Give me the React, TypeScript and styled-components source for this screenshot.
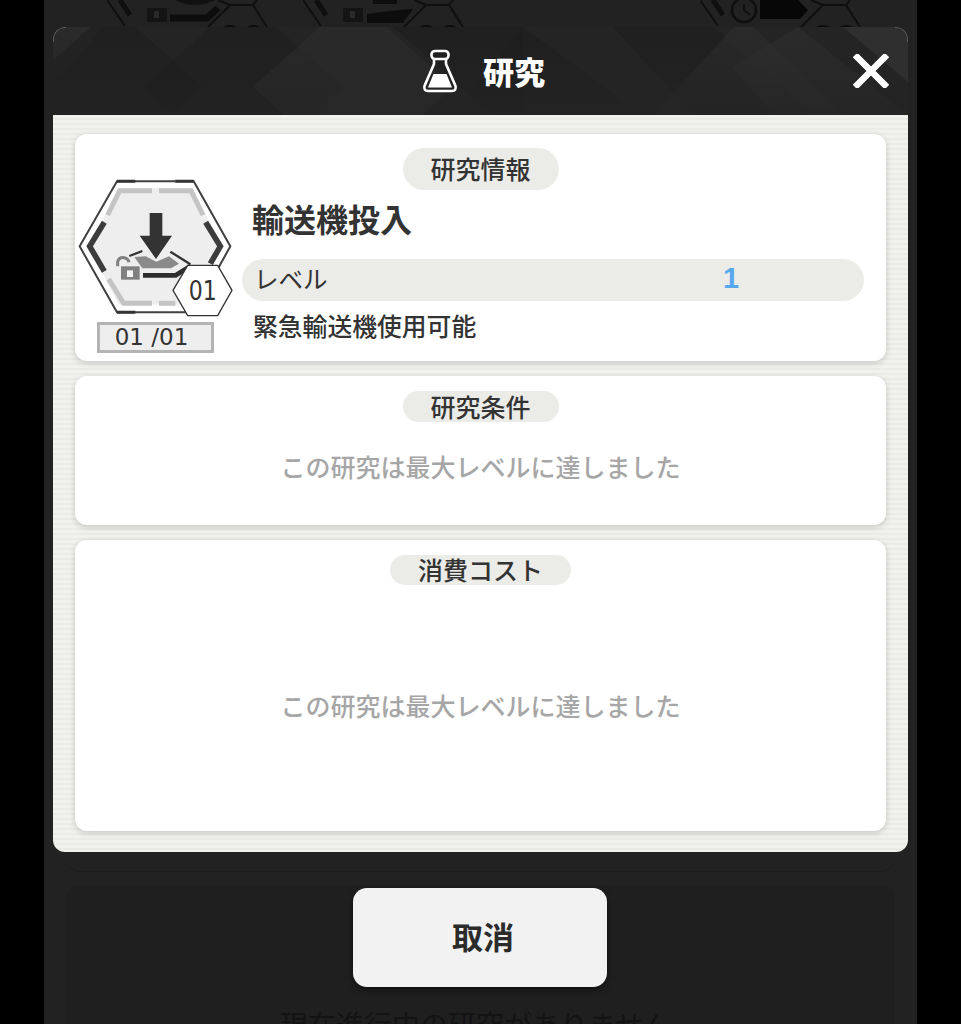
import * as React from 'react';
import styled, { createGlobalStyle } from 'styled-components';

const GlobalStyle = createGlobalStyle`
  html, body {
    margin: 0;
    padding: 0;
    height: 1024px;
    overflow: hidden;
    background: #000;
    font-family: "Noto Sans CJK JP", "Noto Sans", sans-serif;
  }
`;

const BackHex = ({ kind }: { kind: 'lock' | 'lock2' | 'clock' }) => (
  <svg width="161" height="27" viewBox="0 0 161 27">
    <g fill="none" stroke="#0f0f0f" strokeWidth="2">
      <path d="M0 0 L18 26" />
      <path d="M13 0 L23 15" strokeWidth="5" />
      <path d="M101 27 L123 5 H146 L160 27" />
      <path d="M111 0 L123 5 M150 0 L146 5" />
    </g>
    <path d="M116 27 Q123 23 130 27 Z M140 27 Q147 23 153 27 Z" fill="#0c0c0c" />
    {kind === 'clock' ? (
      <>
        <circle cx="44" cy="10" r="12" fill="none" stroke="#0f0f0f" strokeWidth="2.500" />
        <path d="M44 4 V10 L50 15" fill="none" stroke="#0f0f0f" strokeWidth="2" />
        <path d="M60 0 H98 L108 10 L100 19 H60 Z" fill="#070707" />
      </>
    ) : (
      <>
        <rect x="40" y="8" width="20" height="14" fill="#141414" />
        <rect x="47" y="11" width="5" height="7" fill="#2a2a2a" />
        {kind === 'lock' ? (
          <>
            <path d="M63 18 H100 L111 8" fill="none" stroke="#0d0d0d" strokeWidth="7" />
            <path d="M68 0 Q88 10 108 0 Z" fill="#111" />
          </>
        ) : (
          <>
            <path d="M64 14 Q90 10 110 9 L100 23 H64 Z" fill="#0d0d0d" />
            <rect x="70" y="0" width="24" height="4" fill="#0d0d0d" />
          </>
        )}
      </>
    )}
  </svg>
);

const Research = () => (
  <Page>
    <GlobalStyle />
    <Column>
      <BackIcons>
        <BackHex kind="lock" />
        <BackHex kind="lock2" />
        <BackSpacer />
        <BackHex kind="clock" />
      </BackIcons>
      <BackSlot />
      <BackPanel>
        <BackText>現在進行中の研究がありません</BackText>
      </BackPanel>
    </Column>

    <Overlay>
      <Modal>
        <ModalHeader>
          <HeaderPattern viewBox="0 0 855 88" preserveAspectRatio="none">
            <defs>
              <linearGradient id="shade" x1="0" y1="0" x2="0" y2="1">
                <stop offset="0" stopColor="#1d1d1d" stopOpacity="0.7" />
                <stop offset="1" stopColor="#1d1d1d" stopOpacity="0.1" />
              </linearGradient>
              <linearGradient id="light" x1="0" y1="0" x2="0" y2="1">
                <stop offset="0" stopColor="#2e2e2e" stopOpacity="0.7" />
                <stop offset="1" stopColor="#2e2e2e" stopOpacity="0.1" />
              </linearGradient>
            </defs>
            <polygon points="0,0 50,0 0,60" fill="url(#light)" />
            <polygon points="60,-20 150,60 60,140 -30,60" fill="url(#shade)" />
            <polygon points="190,-30 290,60 190,150 90,60" fill="url(#shade)" />
            <polygon points="300,-30 400,60 300,150 200,60" fill="url(#light)" />
            <polygon points="340,0 470,0 470,88 440,88" fill="url(#shade)" />
            <polygon points="470,0 590,88 400,88" fill="url(#shade)" />
            <polygon points="560,0 660,0 760,88 640,88" fill="url(#shade)" />
            <polygon points="600,88 690,-10 790,88" fill="url(#light)" />
            <polygon points="745,0 855,88 720,88 680,40" fill="url(#light)" />
            <polygon points="790,0 855,0 855,55" fill="#2f2f2f" />
          </HeaderPattern>
          <HeaderTitle>
            <svg width="36" height="44" viewBox="0 0 36 44">
              <path
                d="M12 10 V15 L2.500 37 Q1.500 42 6 42 H30 Q34.500 42 33.500 37 L24 15 V10"
                fill="none"
                stroke="#fff"
                strokeWidth="2.600"
              />
              <rect x="9.500" y="2" width="17" height="8" rx="3.500" fill="none" stroke="#fff" strokeWidth="2.600" />
              <path d="M11.500 25 H24.500 L30 38.500 H6 Z" fill="#fff" />
            </svg>
            <HeaderText>研究</HeaderText>
          </HeaderTitle>
          <CloseIcon width="36" height="34" viewBox="0 0 36 34">
            <path d="M2 1 L34 33 M34 1 L2 33" stroke="#fff" strokeWidth="6.500" />
          </CloseIcon>
        </ModalHeader>

        <ModalBody>
          <InfoCard>
            <InfoPillRow>
              <Pill $height={42} $width={156}>研究情報</Pill>
            </InfoPillRow>
            <IconColumn>
              <svg width="160" height="140" viewBox="50 115 480 420">
                <polygon points="58,320 170,125 400,125 510,320 400,518 170,518" fill="#fff" stroke="#404040" strokeWidth="6" />
                <polygon points="85,320 175,145 395,145 485,320 395,495 175,495" fill="#eeeeee" />
                <path d="M170 125 H225 M345 125 H400 M170 518 H225" stroke="#333" strokeWidth="9" />
                <g fill="none" stroke="#c4c4c4" strokeWidth="15">
                  <path d="M142 226 L178 153 H275" />
                  <path d="M296 153 H392 L428 226" />
                  <path d="M145 418 L190 491 H275" />
                  <path d="M296 491 H345" />
                </g>
                <path d="M132 248 L88 320 L132 395" fill="none" stroke="#3c3c3c" strokeWidth="17" />
                <path d="M436 248 L480 320 L450 372" fill="none" stroke="#3c3c3c" strokeWidth="17" />
                <polygon points="268,220 306,220 306,288 335,288 287,358 238,288 268,288" fill="#333" />
                <polygon points="222,352 256,350 288,366 326,350 356,372 332,386 246,386" fill="#8a8a8a" />
                <path d="M207 349 L246 334 M330 336 L390 374" fill="none" stroke="#333" strokeWidth="7" />
                <path d="M248 407 H346 L392 378" fill="none" stroke="#2e2e2e" strokeWidth="14" />
                <rect x="182" y="380" width="56" height="40" fill="#808080" />
                <rect x="200" y="392" width="18" height="20" fill="#f4f4f4" />
                <path d="M172 380 V366 Q176 352 192 354 Q204 356 206 368" fill="none" stroke="#808080" strokeWidth="9" />
                <polygon points="338,452 382,377 472,377 515,452 472,528 382,528" fill="#fff" stroke="#333" strokeWidth="4" />
                <text
                  x="385"
                  y="480"
                  fontFamily="'DejaVu Sans', sans-serif"
                  fontSize="78"
                  textLength="84"
                  lengthAdjust="spacingAndGlyphs"
                  fill="#333"
                >
                  01
                </text>
              </svg>
              <Counter>01 /01</Counter>
            </IconColumn>
            <InfoColumn>
              <InfoTitle>輸送機投入</InfoTitle>
              <LevelRow>
                <span>レベル</span>
                <LevelValue>1</LevelValue>
              </LevelRow>
              <InfoDesc>緊急輸送機使用可能</InfoDesc>
            </InfoColumn>
          </InfoCard>

          <Card $height={149}>
            <Pill $height={31} $width={156}>研究条件</Pill>
            <Notice $top={26}>この研究は最大レベルに達しました</Notice>
          </Card>

          <Card $height={291}>
            <Pill $height={30} $width={181}>消費コスト</Pill>
            <Notice $top={102}>この研究は最大レベルに達しました</Notice>
          </Card>
        </ModalBody>
      </Modal>
      <CancelButton>取消</CancelButton>
    </Overlay>
  </Page>
);

export default function App() {
  return <Research />;
}

const Page = styled.div`
  position: relative;
  width: 961px;
  height: 1024px;
  overflow: hidden;
  background: #000;
`;

const Column = styled.div`
  width: 873px;
  height: 1024px;
  margin: 0 auto;
  padding: 0 22px;
  box-sizing: border-box;
  background: #222222;
  overflow: hidden;
  display: flex;
  flex-direction: column;
`;

const BackIcons = styled.div`
  flex: 0 0 27px;
  display: flex;
  gap: 35px;
  padding-left: 41px;
`;

const BackSpacer = styled.div`
  width: 166px;
`;

const BackSlot = styled.div`
  flex: 0 0 844px;
  border-radius: 0 0 14px 14px;
  border-bottom: 1px solid #1d1d1d;
`;

const BackPanel = styled.div`
  margin-top: 13px;
  flex: 0 0 auto;
  background: #1f1f1f;
  border-radius: 14px 14px 0 0;
  display: flex;
  flex-direction: column;
  align-items: center;
  padding: 119px 10px 0 0;
`;

const BackText = styled.div`
  font-size: 28px;
  line-height: 40px;
  color: #131313;
  white-space: nowrap;
`;

const Overlay = styled.div`
  position: absolute;
  inset: 0;
  display: flex;
  flex-direction: column;
  align-items: center;
  padding-top: 27px;
`;

const Modal = styled.div`
  flex: 0 0 825px;
  width: 855px;
  border-radius: 12px;
  overflow: hidden;
  display: flex;
  flex-direction: column;
`;

const ModalHeader = styled.div`
  position: relative;
  flex: 0 0 88px;
  background: #242424;
  display: flex;
  align-items: center;
  justify-content: center;

  &::before,
  &::after {
    content: '';
    position: absolute;
    top: 0;
    width: 12px;
    height: 14px;
    border-top: 1px solid #5a5a5a;
    z-index: 1;
  }

  &::before {
    left: 0;
    border-left: 1px solid #5a5a5a;
    border-top-left-radius: 12px;
  }

  &::after {
    right: 0;
    border-right: 1px solid #5a5a5a;
    border-top-right-radius: 12px;
  }
`;

const HeaderPattern = styled.svg`
  position: absolute;
  inset: 0;
  width: 100%;
  height: 100%;
`;

const HeaderTitle = styled.div`
  position: relative;
  display: flex;
  align-items: center;
  gap: 25px;
  margin-left: 6px;
`;

const HeaderText = styled.div`
  font-size: 31px;
  font-weight: 900;
  line-height: 40px;
  color: #fff;
`;

const CloseIcon = styled.svg`
  position: absolute;
  right: 19px;
  top: 27px;
`;

const ModalBody = styled.div`
  flex: 1;
  padding: 19px 22px 21px;
  display: flex;
  flex-direction: column;
  gap: 15px;
  background: repeating-linear-gradient(180deg, #f1f1ee 0, #f1f1ee 3px, #eaeae7 3px, #eaeae7 5px);
`;

const Card = styled.div<{ $height: number }>`
  height: ${(p) => p.$height}px;
  box-sizing: border-box;
  padding-top: 15px;
  background: #fff;
  border-radius: 12px;
  box-shadow: 0 2px 6px rgba(0, 0, 0, 0.18);
  display: flex;
  flex-direction: column;
  align-items: center;
`;

const InfoCard = styled.div`
  height: 227px;
  box-sizing: border-box;
  padding-top: 14px;
  background: #fff;
  border-radius: 12px;
  box-shadow: 0 2px 6px rgba(0, 0, 0, 0.18);
  display: grid;
  grid-template-columns: 167px 1fr;
  grid-template-rows: 42px 1fr;
`;

const InfoPillRow = styled.div`
  grid-column: 1 / -1;
  display: flex;
  justify-content: center;
`;

const Pill = styled.div<{ $height: number; $width: number }>`
  width: ${(p) => p.$width}px;
  height: ${(p) => p.$height}px;
  padding-bottom: 2px;
  box-sizing: border-box;
  border-radius: ${(p) => p.$height / 2}px;
  background: #ebebe8;
  display: flex;
  align-items: center;
  justify-content: center;
  font-size: 25px;
  font-weight: 500;
  color: #333;
  white-space: nowrap;
`;

const IconColumn = styled.div`
  margin-top: -12px;
  display: flex;
  flex-direction: column;
  align-items: flex-start;
  padding-left: 2px;
  position: relative;
  z-index: 1;

  svg {
    display: block;
  }
`;

const Counter = styled.div`
  width: 117px;
  height: 31px;
  margin: 4px 0 0 20px;
  padding-right: 8px;
  box-sizing: border-box;
  border: 3px solid #b4b4b4;
  background: #eeeeee;
  font-family: "DejaVu Sans", sans-serif;
  font-size: 23px;
  line-height: 25px;
  text-align: center;
  color: #333;
  white-space: pre;
`;

const InfoColumn = styled.div`
  padding-right: 22px;
  display: flex;
  flex-direction: column;
`;

const InfoTitle = styled.div`
  margin: 5px 0 0 10px;
  font-size: 32px;
  font-weight: 700;
  line-height: 46px;
  color: #333;
`;

const LevelRow = styled.div`
  margin-top: 18px;
  height: 42px;
  padding-bottom: 3px;
  box-sizing: border-box;
  border-radius: 21px;
  background: #ebebe8;
  padding-left: 12px;
  position: relative;
  display: flex;
  align-items: center;
  font-size: 24.500px;
  color: #333;
`;

const LevelValue = styled.span`
  position: absolute;
  left: 481px;
  font-family: "Liberation Sans", sans-serif;
  font-size: 29px;
  font-weight: 700;
  color: #58a8ee;
`;

const InfoDesc = styled.div`
  margin: 6px 0 0 11px;
  font-size: 24.800px;
  font-weight: 500;
  line-height: 36px;
  color: #333;
`;

const Notice = styled.div<{ $top: number }>`
  margin-top: ${(p) => p.$top}px;
  font-size: 25px;
  font-weight: 500;
  line-height: 36px;
  color: #a6a6a6;
  white-space: nowrap;
`;

const CancelButton = styled.button`
  flex: 0 0 99px;
  margin: 36px 1px 0 0;
  width: 254px;
  border: 0;
  border-radius: 14px;
  background: #f2f2f2;
  box-shadow: 0 3px 6px rgba(0, 0, 0, 0.5);
  font-family: inherit;
  font-size: 31px;
  font-weight: 700;
  color: #2b2b2b;
  padding: 0 0 4px 6px;
`;
